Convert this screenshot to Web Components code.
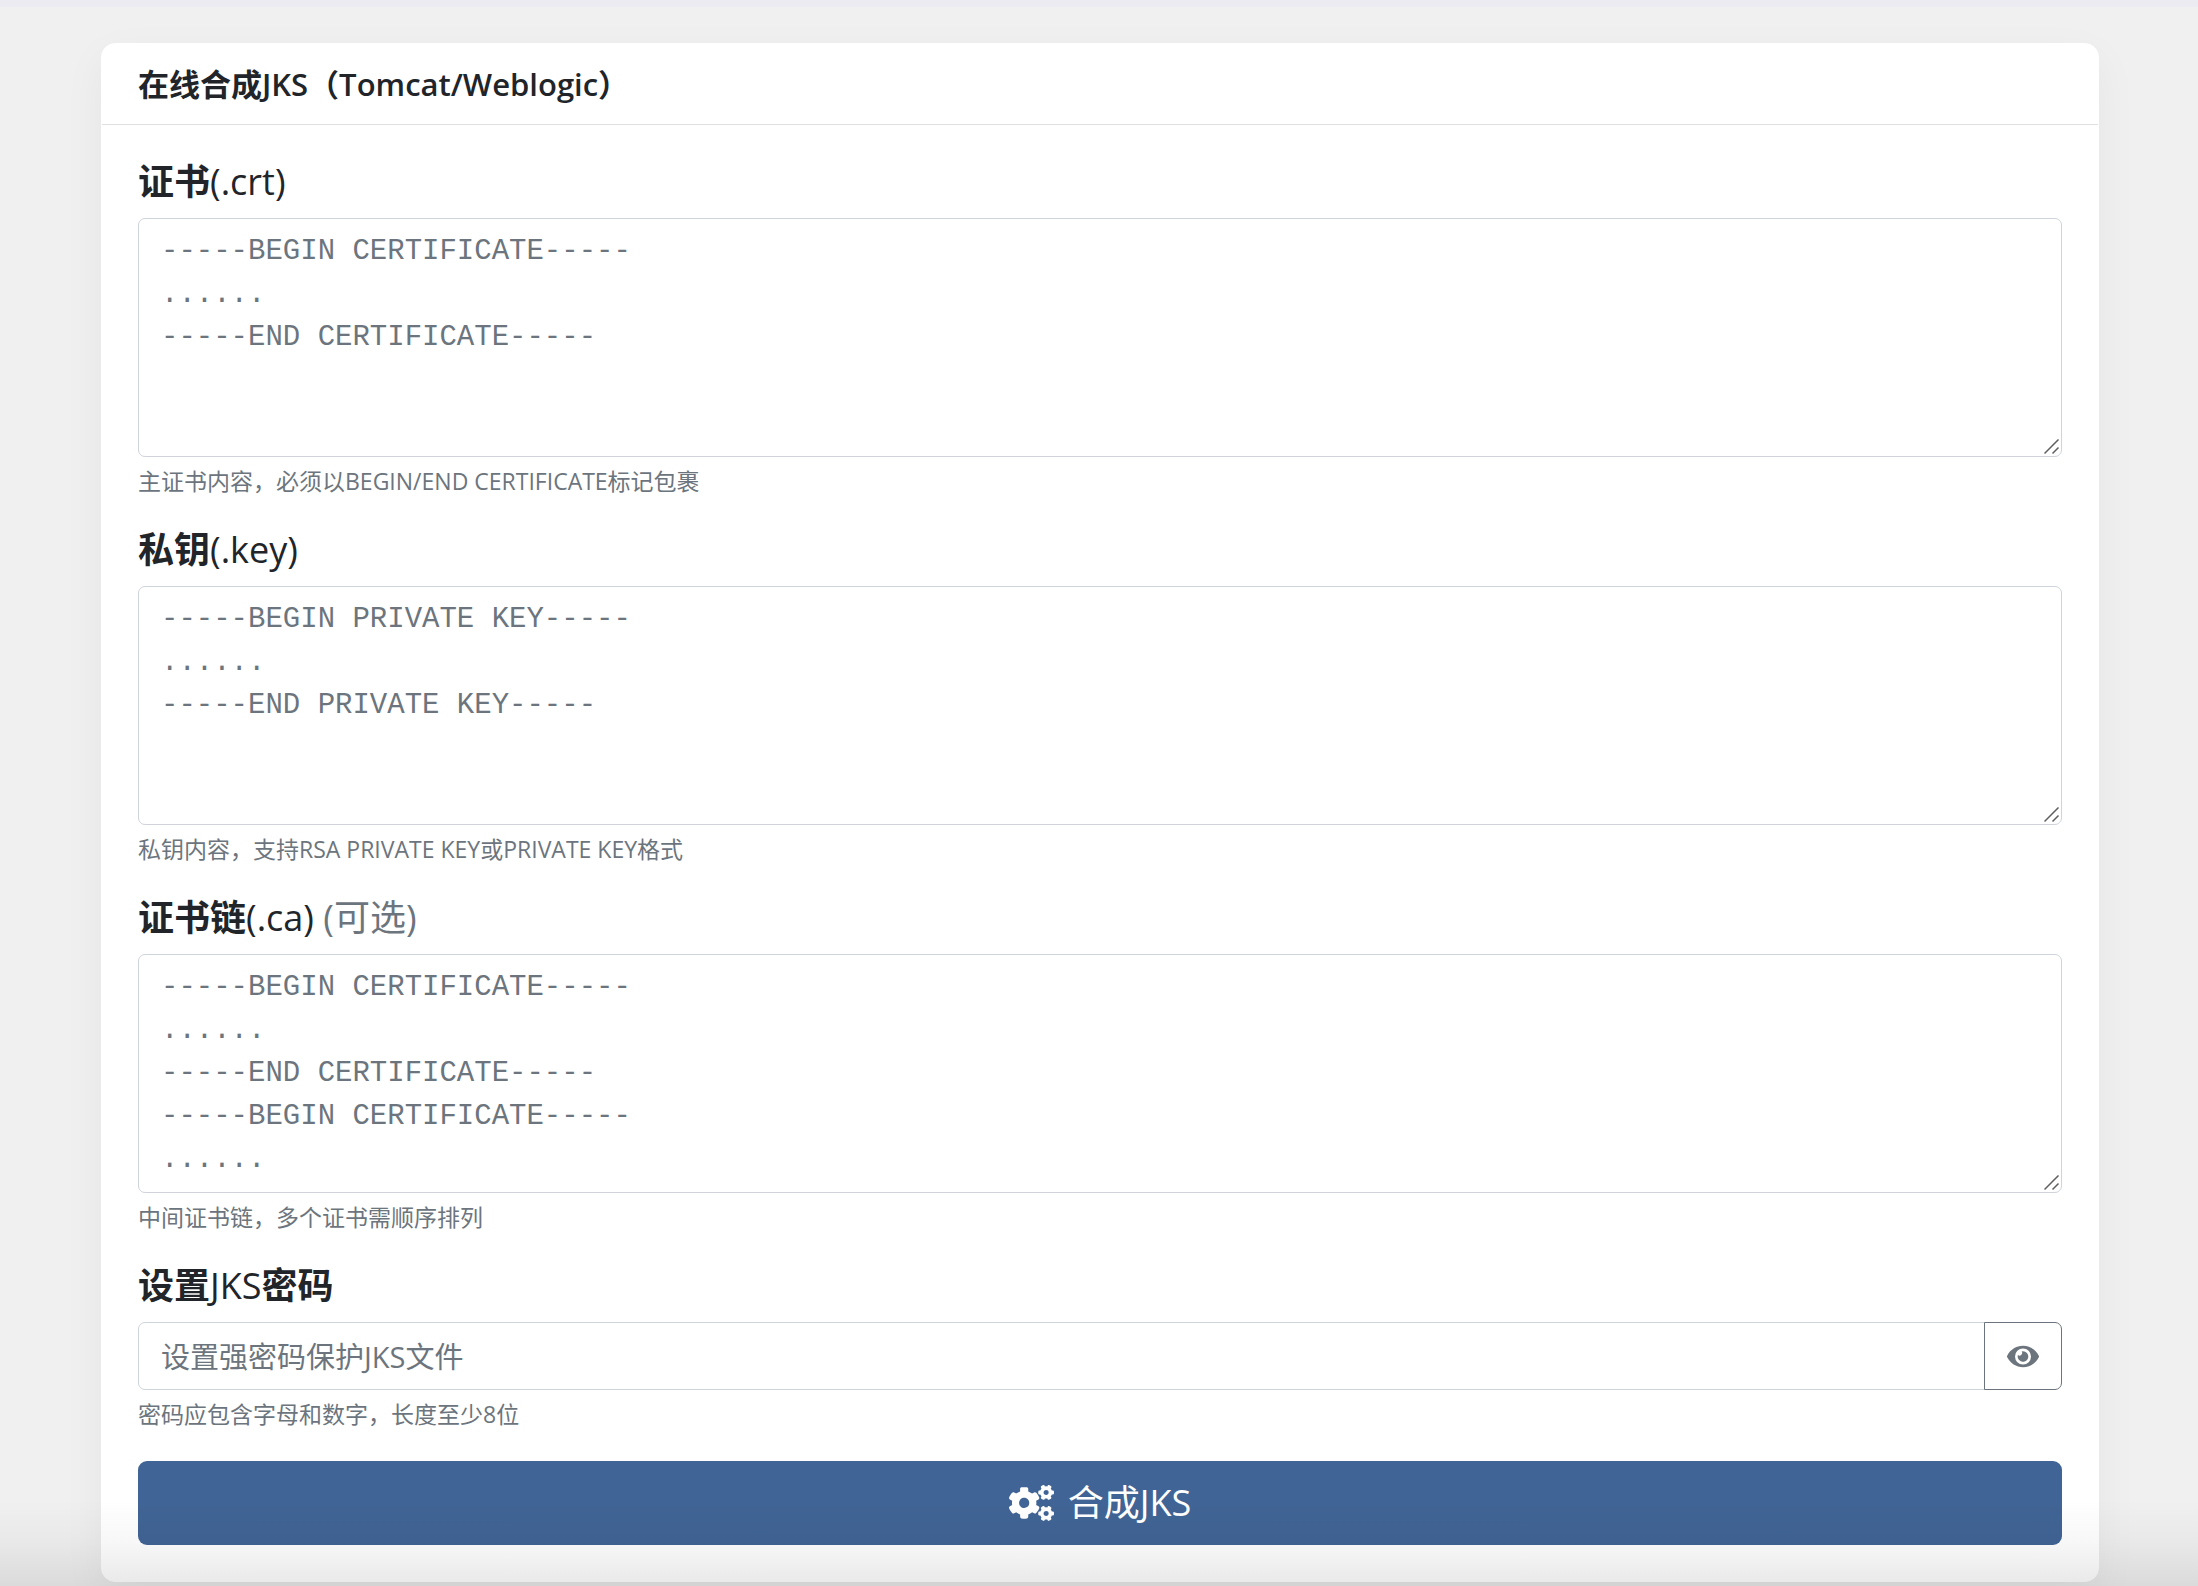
<!DOCTYPE html>
<html lang="zh-CN">
<head>
<meta charset="utf-8">
<meta name="viewport" content="width=device-width, initial-scale=1">
<title>在线合成JKS</title>
<style>
    body {
        margin: 0;
        background: #f0f0f0;
        color: #212529;
        font: 29px/43px "Open Sans", "Noto Sans CJK SC", sans-serif;
    }
</style>
</head>
<body>
<jks-page>
    <jks-card>
        <span slot="title">在线合成JKS（Tomcat/Weblogic）</span>
        <jks-textarea placeholder="-----BEGIN CERTIFICATE-----&#10;......&#10;-----END CERTIFICATE-----">
            <span slot="label"><b>证书</b>(.crt)</span>
            <span slot="hint">主证书内容，必须以BEGIN/END CERTIFICATE标记包裹</span>
        </jks-textarea>
        <jks-textarea placeholder="-----BEGIN PRIVATE KEY-----&#10;......&#10;-----END PRIVATE KEY-----">
            <span slot="label"><b>私钥</b>(.key)</span>
            <span slot="hint">私钥内容，支持RSA PRIVATE KEY或PRIVATE KEY格式</span>
        </jks-textarea>
        <jks-textarea placeholder="-----BEGIN CERTIFICATE-----&#10;......&#10;-----END CERTIFICATE-----&#10;-----BEGIN CERTIFICATE-----&#10;......">
            <span slot="label"><b>证书链</b>(.ca) <span style="color: #6c757d">(可选)</span></span>
            <span slot="hint">中间证书链，多个证书需顺序排列</span>
        </jks-textarea>
        <jks-password placeholder="设置强密码保护JKS文件">
            <span slot="label"><b>设置</b>JKS<b>密码</b></span>
            <span slot="hint">密码应包含字母和数字，长度至少8位</span>
        </jks-password>
        <jks-submit>合成JKS</jks-submit>
    </jks-card>
</jks-page>

<script>
// styles shared by both kinds of field
const fieldStyle = `
    :host {
        display: block;
    }
    label {
        display: block;
        margin-bottom: 15px;
        font-size: 36px;
        line-height: 43px;
    }
    textarea, input {
        display: block;
        box-sizing: border-box;
        width: 100%;
        margin: 0;
        padding: 11px 22px;
        border: 1px solid #ced4da;
        border-radius: 7px;
        background: #fff;
        color: #212529;
        font: inherit;
    }
    ::placeholder {
        color: #6c757d;
        opacity: 1;
    }
    .hint {
        margin-top: 7px;
        color: #6c757d;
        font-size: 23px;
        line-height: 35px;
    }
`;

class JksPage extends HTMLElement {
    constructor () {
        super();
        this.attachShadow({ mode: 'open' }).innerHTML = `
            <style>
                :host {
                    display: block;
                    position: relative;
                    box-sizing: border-box;
                    min-height: 100vh;
                    overflow: hidden;
                    border-top: 7px solid #ebebf1;
                    padding: 36px 99px 4px 101px;
                }
                .fade {
                    position: absolute;
                    right: 0;
                    bottom: 0;
                    left: 0;
                    height: 86px;
                    background: linear-gradient(rgba(0, 0, 0, 0), rgba(0, 0, 0, .03) 50%, rgba(0, 0, 0, .09));
                    pointer-events: none;
                }
            </style>
            <slot></slot>
            <div class="fade"></div>
        `;
    }
}

class JksCard extends HTMLElement {
    constructor () {
        super();
        this.attachShadow({ mode: 'open' }).innerHTML = `
            <style>
                :host {
                    display: block;
                    border: 1px solid #fff;
                    border-radius: 14px;
                    background: #fff;
                    box-shadow: 0 14px 43px rgba(0, 0, 0, .05);
                }
                h5 {
                    margin: 0;
                    padding: 20px 36px;
                    border-bottom: 1px solid #dfdfdf;
                    font-size: 31px;
                    font-weight: 600;
                    line-height: 40px;
                }
                .body {
                    display: flex;
                    flex-direction: column;
                    gap: 29px;
                    padding: 35px 36px 36px;
                }
            </style>
            <h5><slot name="title"></slot></h5>
            <div class="body"><slot></slot></div>
        `;
    }
}

class JksTextarea extends HTMLElement {
    constructor () {
        super();
        this.attachShadow({ mode: 'open' }).innerHTML = `
            <style>
                ${fieldStyle}
                .box {
                    position: relative;
                }
                textarea {
                    resize: vertical;
                    overflow: auto;
                    font-family: "Liberation Mono", monospace;
                }
                /* the grip is drawn by the svg, the native one only takes the drag */
                ::-webkit-resizer {
                    background: none;
                }
                svg {
                    position: absolute;
                    right: 2px;
                    bottom: 2px;
                    width: 16px;
                    height: 16px;
                    pointer-events: none;
                }
            </style>
            <label for="text"><slot name="label"></slot></label>
            <div class="box">
                <textarea id="text" rows="5" aria-describedby="hint"></textarea>
                <svg viewBox="0 0 16 16" fill="none" stroke="#5f5f5f" stroke-width="1.5" aria-hidden="true"><path d="M.5 14.5l14-14M8.5 14.5l6-6"/></svg>
            </div>
            <div class="hint" id="hint"><slot name="hint"></slot></div>
        `;
        this.shadowRoot.querySelector('textarea').placeholder = this.getAttribute('placeholder');
    }
}

class JksPassword extends HTMLElement {
    constructor () {
        super();
        this.attachShadow({ mode: 'open' }).innerHTML = `
            <style>
                ${fieldStyle}
                .group {
                    display: flex;
                }
                input {
                    flex: 1;
                    height: 68px;
                    border-radius: 7px 0 0 7px;
                }
                button {
                    display: flex;
                    align-items: center;
                    margin: 0 0 0 -1px;
                    padding: 0 22px;
                    border: 1px solid #6c757d;
                    border-radius: 0 7px 7px 0;
                    background: none;
                    color: #6c757d;
                }
                svg {
                    width: 32px;
                    height: 29px;
                }
            </style>
            <label for="password"><slot name="label"></slot></label>
            <div class="group">
                <input type="password" id="password" aria-describedby="hint">
                <button type="button" aria-label="显示密码">
                    <svg viewBox="0 0 576 512" fill="currentColor" aria-hidden="true"><path d="M572.52 241.4C518.29 135.59 410.93 64 288 64S57.68 135.64 3.48 241.41a32.35 32.35 0 0 0 0 29.19C57.71 376.41 165.07 448 288 448s230.32-71.64 284.52-177.41a32.35 32.35 0 0 0 0-29.19zM288 400a144 144 0 1 1 144-144 143.93 143.93 0 0 1-144 144zm0-240a95.31 95.31 0 0 0-25.31 3.79 47.85 47.85 0 0 1-66.9 66.9A95.78 95.78 0 1 0 288 160z"/></svg>
                </button>
            </div>
            <div class="hint" id="hint"><slot name="hint"></slot></div>
        `;
        const input = this.shadowRoot.querySelector('input');
        input.placeholder = this.getAttribute('placeholder');
        this.shadowRoot.querySelector('button').addEventListener('click', () => {
            input.type = input.type === 'password' ? 'text' : 'password';
        });
    }
}

class JksSubmit extends HTMLElement {
    constructor () {
        super();
        this.attachShadow({ mode: 'open' }).innerHTML = `
            <style>
                :host {
                    display: block;
                }
                button {
                    display: flex;
                    align-items: center;
                    justify-content: center;
                    gap: 14px;
                    width: 100%;
                    padding: 15px 29px;
                    border: 0;
                    border-radius: 9px;
                    background: #406495;
                    color: #fff;
                    font: inherit;
                    font-size: 36px;
                    line-height: 54px;
                }
                svg {
                    width: 45px;
                    height: 36px;
                }
            </style>
            <button type="button">
                <svg viewBox="0 0 640 512" fill="currentColor" aria-hidden="true"><path d="M512.1 191l-8.2 14.3c-3 5.3-9.4 7.5-15.1 5.4-11.8-4.4-22.6-10.7-32.1-18.6-4.6-3.8-5.8-10.5-2.8-15.7l8.2-14.3c-6.9-8-12.3-17.3-15.9-27.4h-16.5c-6 0-11.2-4.3-12.2-10.3-2-12-2.1-24.6 0-37.1 1-6 6.2-10.4 12.2-10.4h16.5c3.6-10.1 9-19.4 15.9-27.4l-8.2-14.3c-3-5.2-1.9-11.9 2.8-15.7 9.5-7.9 20.4-14.2 32.1-18.6 5.7-2.1 12.1.1 15.1 5.4l8.2 14.3c10.5-1.9 21.2-1.9 31.7 0L552 6.3c3-5.3 9.4-7.5 15.1-5.4 11.8 4.4 22.6 10.7 32.1 18.6 4.6 3.8 5.8 10.5 2.8 15.7l-8.2 14.3c6.9 8 12.3 17.3 15.9 27.4h16.5c6 0 11.2 4.3 12.2 10.3 2 12 2.1 24.6 0 37.1-1 6-6.2 10.4-12.2 10.4h-16.5c-3.6 10.1-9 19.4-15.9 27.4l8.2 14.3c3 5.2 1.9 11.9-2.8 15.7-9.5 7.9-20.4 14.2-32.1 18.6-5.7 2.1-12.1-.1-15.1-5.4l-8.2-14.3c-10.4 1.9-21.2 1.9-31.7 0zm-10.5-58.8c38.5 29.6 82.4-14.3 52.8-52.8-38.5-29.7-82.4 14.3-52.8 52.8zM386.3 286.1l33.7 16.8c10.1 5.8 14.5 18.1 10.5 29.1-8.9 24.2-26.4 46.4-42.6 65.8-7.4 8.9-20.2 11.1-30.3 5.3l-29.1-16.8c-16 13.7-34.6 24.6-54.9 31.7v33.6c0 11.6-8.3 21.6-19.7 23.6-24.6 4.2-50.4 4.4-75.9 0-11.5-2-20-11.9-20-23.6V418c-20.3-7.2-38.9-18-54.9-31.7L74 403c-10 5.8-22.9 3.6-30.3-5.3-16.2-19.4-33.3-41.6-42.2-65.7-4-10.9.4-23.2 10.5-29.1l33.3-16.8c-3.9-20.9-3.9-42.4 0-63.4L12 205.8c-10.1-5.8-14.6-18.1-10.5-29 8.9-24.2 26-46.4 42.2-65.8 7.4-8.9 20.2-11.1 30.3-5.3l29.1 16.8c16-13.7 34.6-24.6 54.9-31.7V57.1c0-11.5 8.2-21.5 19.6-23.5 24.6-4.2 50.5-4.4 76-.1 11.5 2 20 11.9 20 23.6v33.6c20.3 7.2 38.9 18 54.9 31.7l29.1-16.8c10-5.8 22.9-3.6 30.3 5.3 16.2 19.4 33.2 41.6 42.1 65.8 4 10.9.1 23.2-10 29.1l-33.7 16.8c3.9 21 3.9 42.5 0 63.5zm-117.6 21.1c59.2-77-28.7-164.9-105.7-105.7-59.2 77 28.7 164.9 105.7 105.7zm243.4 182.7l-8.2 14.3c-3 5.3-9.4 7.5-15.1 5.4-11.8-4.4-22.6-10.7-32.1-18.6-4.6-3.8-5.8-10.5-2.8-15.7l8.2-14.3c-6.9-8-12.3-17.3-15.9-27.4h-16.5c-6 0-11.2-4.3-12.2-10.3-2-12-2.1-24.6 0-37.1 1-6 6.2-10.4 12.2-10.4h16.5c3.6-10.1 9-19.4 15.9-27.4l-8.2-14.3c-3-5.2-1.9-11.9 2.8-15.7 9.5-7.9 20.4-14.2 32.1-18.6 5.7-2.1 12.1.1 15.1 5.4l8.2 14.3c10.5-1.9 21.2-1.9 31.7 0l8.2-14.3c3-5.3 9.4-7.5 15.1-5.4 11.8 4.4 22.6 10.7 32.1 18.6 4.6 3.8 5.8 10.5 2.8 15.7l-8.2 14.3c6.9 8 12.3 17.3 15.9 27.4h16.5c6 0 11.2 4.3 12.2 10.3 2 12 2.1 24.6 0 37.1-1 6-6.2 10.4-12.2 10.4h-16.5c-3.6 10.1-9 19.4-15.9 27.4l8.2 14.3c3 5.2 1.9 11.9-2.8 15.7-9.5 7.9-20.4 14.2-32.1 18.6-5.7 2.1-12.1-.1-15.1-5.4l-8.2-14.3c-10.4 1.9-21.2 1.9-31.7 0zM501.6 431c38.5 29.6 82.4-14.3 52.8-52.8-38.5-29.6-82.4 14.3-52.8 52.8z"/></svg>
                <span><slot></slot></span>
            </button>
        `;
    }
}

customElements.define('jks-page', JksPage);
customElements.define('jks-card', JksCard);
customElements.define('jks-textarea', JksTextarea);
customElements.define('jks-password', JksPassword);
customElements.define('jks-submit', JksSubmit);
</script>
</body>
</html>
